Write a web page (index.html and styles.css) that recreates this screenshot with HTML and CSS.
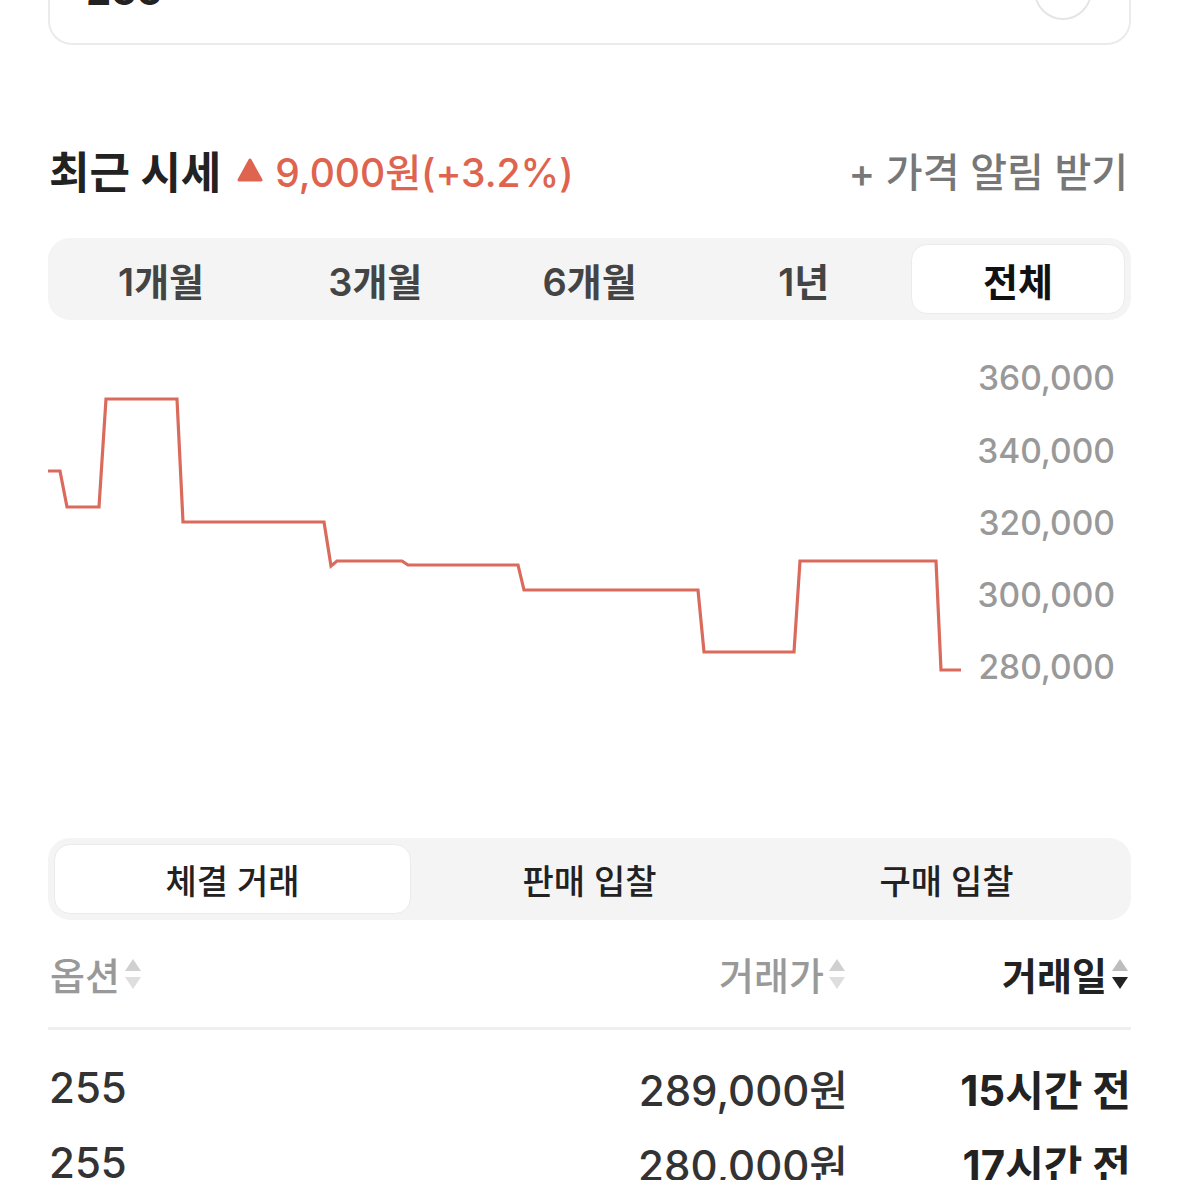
FILE: index.html
```html
<!DOCTYPE html>
<html lang="ko">
<head>
  <meta charset="UTF-8">
  <title>최근 시세</title>
  <link rel="stylesheet" href="styles.css">
</head>
<body>
  <div class="page">
    <div class="size-card">
      <span class="size-value">255</span>
      <span class="size-btn"></span>
    </div>

    <div class="title-row">
      <div class="title">
        <h2>최근 시세</h2>
        <span class="change">
          <svg class="up" width="26" height="24" viewBox="0 0 26 24"><path d="M13 2 L24 22 L2 22 Z" fill="#de6450" stroke="#de6450" stroke-width="3" stroke-linejoin="round"/></svg>
          9,000원(+3.2%)
        </span>
      </div>
      <span class="alert">+ 가격 알림 받기</span>
    </div>

    <div class="period-tabs">
      <span class="tab">1개월</span>
      <span class="tab">3개월</span>
      <span class="tab">6개월</span>
      <span class="tab">1년</span>
      <span class="tab active">전체</span>
    </div>

    <div class="chart">
      <svg width="1083" height="518" viewBox="0 0 1083 518">
        <polyline fill="none" stroke="#d96a5c" stroke-width="3.2" stroke-linejoin="miter"
          points="0,151 12,151 19,187 51,187 58,79 129,79 135,202 276,202 283,246 289,241 354,241 360,245 470,245 476,270 650,270 656,332 746,332 752,241 888,241 893,350 913,350"/>
        <g class="axis">
          <text x="1067" y="61">360,000</text>
          <text x="1067" y="134">340,000</text>
          <text x="1067" y="206">320,000</text>
          <text x="1067" y="278">300,000</text>
          <text x="1067" y="350">280,000</text>
        </g>
      </svg>
    </div>

    <div class="trade-tabs">
      <span class="tab active">체결 거래</span>
      <span class="tab">판매 입찰</span>
      <span class="tab">구매 입찰</span>
    </div>

    <div class="table-head">
      <span class="th">옵션<svg class="sort" width="22" height="36" viewBox="0 0 22 36"><path d="M11 3 L19 15 L3 15 Z" fill="#d0d0d0"/><path d="M11 33 L19 21 L3 21 Z" fill="#dedede"/></svg></span>
      <span class="th right">거래가<svg class="sort" width="22" height="36" viewBox="0 0 22 36"><path d="M11 3 L19 15 L3 15 Z" fill="#d0d0d0"/><path d="M11 33 L19 21 L3 21 Z" fill="#dedede"/></svg></span>
      <span class="th right on">거래일<svg class="sort" width="22" height="36" viewBox="0 0 22 36"><path d="M11 3 L19 15 L3 15 Z" fill="#bdbdbd"/><path d="M11 33 L19 21 L3 21 Z" fill="#222"/></svg></span>
    </div>

    <div class="rows">
      <div class="row">
        <span>255</span>
        <span class="right">289,000원</span>
        <span class="right when">15시간 전</span>
      </div>
      <div class="row">
        <span>255</span>
        <span class="right">280,000원</span>
        <span class="right when">17시간 전</span>
      </div>
    </div>
  </div>
</body>
</html>
```

FILE: styles.css
```css
body {
  margin: 0;
  background: #fff;
  color: #222;
  font-family: Inter, "Noto Sans CJK KR", sans-serif;
  overflow: hidden;
}
.page {
  padding: 0 48px;
}
.size-card {
  margin-top: -60px;
  height: 105px;
  box-sizing: border-box;
  border: 2px solid #ebebeb;
  border-radius: 24px;
  padding: 20px 37px 0 36px;
  display: flex;
  justify-content: space-between;
  align-items: flex-start;
}
.size-value {
  font-size: 40px;
  font-weight: 700;
  line-height: 58px;
}
.size-btn {
  width: 54px;
  height: 54px;
  border: 2px solid #e5e5e5;
  border-radius: 50%;
}
.title-row {
  margin-top: 97px;
  height: 56px;
  display: flex;
  align-items: center;
  justify-content: space-between;
}
.title {
  display: flex;
  align-items: center;
}
.title h2 {
  margin: 0 16px 0 1px;
  font-size: 44px;
  font-weight: 700;
  color: #222;
}
.change {
  display: flex;
  align-items: center;
  gap: 12px;
  font-size: 39px;
  font-weight: 500;
  color: #de6450;
}
.alert {
  font-size: 40px;
  font-weight: 500;
  color: #777;
  margin-right: 3px;
}
.period-tabs,
.trade-tabs {
  margin-top: 40px;
  height: 82px;
  box-sizing: border-box;
  padding: 6px;
  background: #f4f4f4;
  border-radius: 22px;
  display: grid;
  grid-template-columns: repeat(5, 1fr);
}
.trade-tabs {
  margin-top: 0;
  grid-template-columns: repeat(3, 1fr);
}
.tab {
  display: flex;
  align-items: center;
  justify-content: center;
  font-size: 38px;
  font-weight: 600;
  color: #444;
  border-radius: 16px;
}
.trade-tabs .tab {
  font-size: 34px;
  font-weight: 500;
  color: #222;
}
.tab.active {
  background: #fff;
  border: 1px solid #ebebeb;
  color: #111;
  font-weight: 700;
}
.trade-tabs .tab.active {
  font-weight: 500;
  color: #222;
}
.chart {
  height: 518px;
}
.chart svg {
  display: block;
}
.axis text {
  font-family: Inter, sans-serif;
  font-size: 33.5px;
  font-weight: 500;
  fill: #999;
  text-anchor: end;
  dominant-baseline: middle;
}
.table-head {
  height: 110px;
  display: grid;
  grid-template-columns: 1fr 400px 283px;
  align-items: center;
  border-bottom: 3px solid #efefef;
  box-sizing: border-box;
}
.th {
  display: flex;
  align-items: center;
  font-size: 38px;
  font-weight: 500;
  color: #999;
  padding-left: 2px;
}
.th.right {
  justify-content: flex-end;
}
.th.on {
  color: #222;
  font-weight: 700;
}
.sort {
  margin-left: 2px;
}
.rows {
  padding-top: 20px;
}
.row {
  height: 75px;
  display: grid;
  grid-template-columns: 1fr 400px 283px;
  align-items: center;
  font-size: 42px;
  font-weight: 500;
  color: #333;
  padding-left: 1px;
}
.row .right {
  text-align: right;
}
.row .when {
  font-weight: 700;
  color: #222;
}
```
